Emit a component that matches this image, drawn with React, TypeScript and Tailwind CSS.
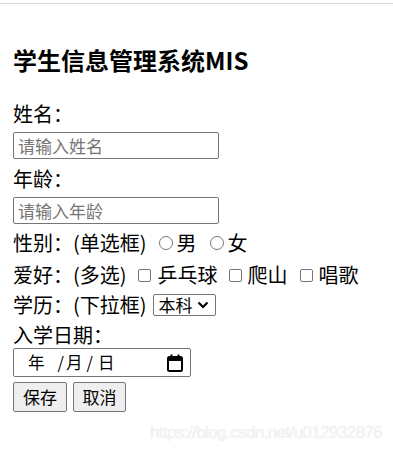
import React from 'react';

const font = { fontFamily: '"Noto Sans CJK SC", "Noto Sans", sans-serif' };

const Radio: React.FC = () => (
  <span className="inline-block w-[14px] h-[14px] rounded-full border border-[#767676] bg-white shrink-0" />
);

const Checkbox: React.FC = () => (
  <span className="inline-block w-[13px] h-[13px] rounded-[2px] border border-[#767676] bg-white shrink-0" />
);

const TextInput: React.FC<{ placeholder: string }> = ({ placeholder }) => (
  <input
    type="text"
    placeholder={placeholder}
    className="block w-[206px] h-[27px] px-[4px] border border-[#767676] rounded-[2px] text-[17px] text-black placeholder-[#757575] outline-none"
  />
);

const CalendarIcon: React.FC = () => (
  <svg width="16" height="18" viewBox="0 0 16 18" fill="none">
    <rect x="1" y="3" width="14" height="14" rx="1.5" stroke="black" strokeWidth="2" />
    <rect x="1" y="3" width="14" height="4" fill="black" />
    <rect x="3.5" y="0.5" width="2" height="3" fill="black" />
    <rect x="10.5" y="0.5" width="2" height="3" fill="black" />
  </svg>
);

export default function App() {
  return (
    <div className="relative w-[393px] h-[451px] bg-white overflow-hidden text-black" style={font}>
      <div className="h-[3px]" />
      <div className="h-px bg-[#dcdcdc]" />

      <div className="pl-[13px]">
        <div className="mt-[40px] h-[32px] flex items-center text-[24px] font-bold">学生信息管理系统MIS</div>

        <div className="mt-[26px] h-[24px] flex items-center text-[20px]">姓名：</div>
        <div className="mt-[6px]">
          <TextInput placeholder="请输入姓名" />
        </div>

        <div className="mt-[8px] h-[24px] flex items-center text-[20px]">年龄：</div>
        <div className="mt-[6px]">
          <TextInput placeholder="请输入年龄" />
        </div>

        <div className="mt-[7px] h-[24px] flex items-center text-[20px]">
          <span>性别：</span>
          <span>(单选框)</span>
          <span className="ml-[12px] flex items-center">
            <Radio />
            <span className="ml-[4px]">男</span>
          </span>
          <span className="ml-[13px] flex items-center">
            <Radio />
            <span className="ml-[4px]">女</span>
          </span>
        </div>

        <div className="mt-[8px] h-[24px] flex items-center text-[20px]">
          <span>爱好：</span>
          <span>(多选)</span>
          <span className="ml-[11px] flex items-center">
            <Checkbox />
            <span className="ml-[7px]">乒乓球</span>
          </span>
          <span className="ml-[11px] flex items-center">
            <Checkbox />
            <span className="ml-[6px]">爬山</span>
          </span>
          <span className="ml-[12px] flex items-center">
            <Checkbox />
            <span className="ml-[6px]">唱歌</span>
          </span>
        </div>

        <div className="mt-[6px] h-[24px] flex items-center text-[20px]">
          <span>学历：</span>
          <span>(下拉框)</span>
          <div className="ml-[6px] w-[63px] h-[22px] border border-[#767676] rounded-[2px] flex items-center pl-[5px] text-[17px]">
            <span>本科</span>
            <svg className="ml-[4px]" width="12" height="8" viewBox="0 0 12 8" fill="none">
              <polyline points="1.5,1.5 6,6 10.5,1.5" stroke="black" strokeWidth="2.2" />
            </svg>
          </div>
        </div>

        <div className="mt-[6px] h-[24px] flex items-center text-[20px]">入学日期：</div>
        <div className="mt-[1px] w-[178px] h-[29px] border border-[#767676] rounded-[2px] flex items-center text-[16.5px] relative">
          <span className="ml-[14px]">年</span>
          <span className="ml-[13px]">/</span>
          <span className="ml-[2px]">月</span>
          <span className="ml-[4px]">/</span>
          <span className="ml-[5px]">日</span>
          <span className="ml-auto mr-[7px] flex items-center">
            <CalendarIcon />
          </span>
        </div>

        <div className="mt-[5px] flex gap-[6px]">
          <button className="w-[54px] h-[30px] bg-[#efefef] border border-[#767676] rounded-[2px] text-[17px]">保存</button>
          <button className="w-[53px] h-[30px] bg-[#efefef] border border-[#767676] rounded-[2px] text-[17px]">取消</button>
        </div>
      </div>

      <div
        className="absolute left-[150px] top-[420px] text-[17px] text-[#f4f4f4] tracking-[-0.6px] whitespace-nowrap pointer-events-none"
        style={{ fontFamily: '"Liberation Sans", sans-serif', textShadow: '0 0 1px #e2e2e2' }}
      >
        https://blog.csdn.net/u012932876
      </div>
    </div>
  );
}
